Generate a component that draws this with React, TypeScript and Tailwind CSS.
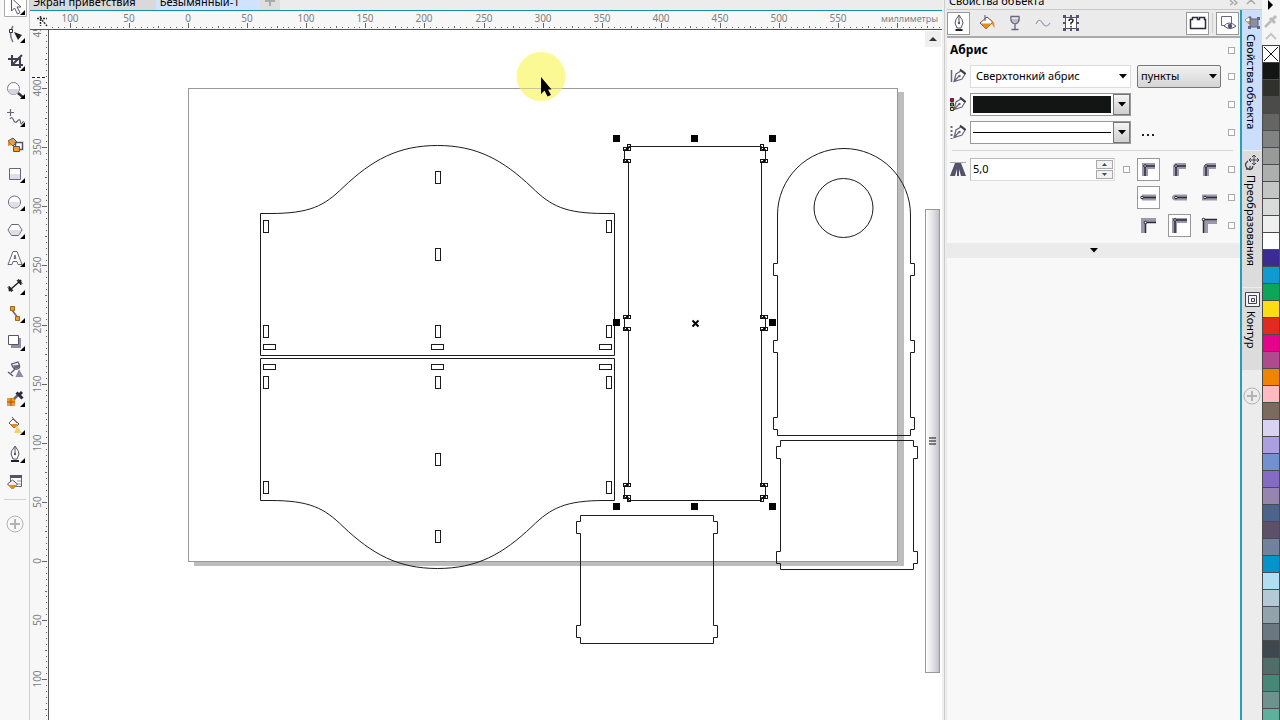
import type { ReactNode } from "react"

const TICK = 5.911
const ORIGIN_X = 188
const ORIGIN_Y = 561

const swatches = [
  "#131514", "#30312d", "#4b4b4a", "#656664", "#818282", "#989a98", "#adafae", "#c3c5c4", "#d9dada", "#eef0ef",
  "#ffffff", "#3b2c94", "#109bd0", "#0ca65b", "#fbdd13", "#e22b20", "#e4038a", "#b04a8e", "#f08300", "#ffbabf",
  "#7c6a5e", "#d9d2f3", "#ab9fdf", "#7391ce", "#866bc4", "#9585af", "#4d648a", "#5c506a", "#73829c", "#0494c9",
  "#b1def2", "#b4c8d6", "#93a3ab", "#6a7780", "#3f484e", "#516d69", "#478777", "#70928f", "#5eb09d",
]

const tools: { label: string; flyout: boolean; art: ReactNode }[] = [
  {
    label: "Указатель",
    flyout: true,
    art: (
      <>
        <path d="M1.500 0V24.500H23.500V0" fill="#fff" stroke="#aaa" />
        <path d="M8.500 6v13l3-3 3 6 2.500-1.500-3-5.500h4z" fill="#fff" stroke="#55536b" />
      </>
    ),
  },
  {
    label: "Форма",
    flyout: true,
    art: (
      <>
        <path d="M10 6Q5 14 10 22" fill="none" stroke="#77758a" strokeWidth="1.500" />
        <path d="M6.500 9.500h3v3h-3z" fill="#fff" stroke="#333" />
        <path d="M11 12l8 3-4 5z" fill="#222" />
      </>
    ),
  },
  {
    label: "Обрезка",
    flyout: true,
    art: <path d="M5 11H17V20M9 7V17H20M9 17L19 7" fill="none" stroke="#403e4c" strokeWidth="2" />,
  },
  {
    label: "Масштаб",
    flyout: true,
    art: (
      <>
        <circle cx="10.500" cy="12.500" r="6" fill="#fff" stroke="#77758a" />
        <path d="M5 13h11a5.500 5.500 0 0 1-11 0z" fill="#d5d5e2" />
        <path d="M15 17l6 5" stroke="#333240" strokeWidth="2.500" />
      </>
    ),
  },
  {
    label: "Свободная форма",
    flyout: true,
    art: (
      <path d="M7.500 5v7M4 8.500h7M7 15q2-3 3.500 1t4 1 3 1 3-1" fill="none" stroke="#68667c" strokeWidth="1.200" />
    ),
  },
  {
    label: "Интеллектуальная заливка",
    flyout: false,
    art: (
      <>
        <path d="M5 9l5-3 4 4-4 4z" fill="#e0a24c" stroke="#55536b" />
        <path d="M5 9l4 4-4 1z" fill="#e88b1b" />
        <path d="M12.500 10.500h7v7h-7z" fill="#fff" stroke="#55536b" strokeWidth="1.500" />
        <path d="M10.500 14.500h6v5h-6z" fill="#f39a1f" stroke="#55536b" />
      </>
    ),
  },
  {
    label: "Прямоугольник",
    flyout: true,
    art: (
      <>
        <path d="M6.500 8.500h11v11h-11z" fill="#fff" stroke="#68667c" />
        <path d="M7 14h10v5H7z" fill="#dedee8" />
      </>
    ),
  },
  {
    label: "Эллипс",
    flyout: true,
    art: (
      <>
        <circle cx="11.500" cy="14" r="6" fill="#fff" stroke="#68667c" />
        <path d="M6 14h11a5.500 5.500 0 0 1-11 0z" fill="#dedee8" />
      </>
    ),
  },
  {
    label: "Многоугольник",
    flyout: true,
    art: (
      <>
        <path d="M8.500 8.500h7l3.500 5.500-3.500 5.500h-7L5 14z" fill="#fff" stroke="#68667c" />
        <path d="M6 14h12l-3 5H9z" fill="#dedee8" />
      </>
    ),
  },
  {
    label: "Текст",
    flyout: true,
    art: (
      <path
        d="M5 20.500L10 7.500h4l5 13h-4l-1-3h-4l-1 3zM11 14.500h2l-1-3.500z"
        fill="#fff"
        stroke="#68667c"
      />
    ),
  },
  {
    label: "Размерная линия",
    flyout: true,
    art: (
      <>
        <path d="M8 17l8-7" stroke="#222" strokeWidth="1.500" />
        <path d="M6 19V14l4 4.500zM18 8v5l-4-4.500zM4.500 15l4.500 5M15 7l4.500 5" fill="#222" stroke="#222" strokeWidth=".8" />
      </>
    ),
  },
  {
    label: "Соединительная линия",
    flyout: true,
    art: (
      <>
        <path d="M9 10l6 8" stroke="#68667c" strokeWidth="1.500" />
        <path d="M7.500 6.500h4v4h-4zM12.500 16.500h4v4h-4z" fill="#f39a1f" stroke="#a0651d" />
      </>
    ),
  },
  {
    label: "Тень",
    flyout: true,
    art: (
      <>
        <path d="M8 10h10v10H8z" fill="#8f8da6" />
        <path d="M5.500 7.500h10v9h-10z" fill="#fff" stroke="#55536b" />
      </>
    ),
  },
  {
    label: "Прозрачность",
    flyout: false,
    art: (
      <>
        <path d="M16 13l4.500 8h-8z" fill="#8f8da6" />
        <path d="M8.500 8L15 6q3.500 6-.5 7t-6-5z" fill="#e7e7f0" stroke="#55536b" strokeWidth="1.200" />
        <path d="M10 9.500l6-.5q.5 3-2 3.500t-4-3z" fill="#68667c" />
        <path d="M12 13l-4 4M5 16l5 4" stroke="#55536b" strokeWidth="1.200" />
      </>
    ),
  },
  {
    label: "Пипетка",
    flyout: true,
    art: (
      <>
        <path d="M4 14h8v8H4z" fill="#f39a1f" />
        <path d="M4 18h8M8 14v8" stroke="#9b5b18" />
        <path d="M11 15l5-5" stroke="#68667c" strokeWidth="2.500" />
        <path d="M13.500 8.500l6 6M15 12l4-4" stroke="#2e2c3c" strokeWidth="3" />
      </>
    ),
  },
  {
    label: "Интерактивная заливка",
    flyout: true,
    art: (
      <>
        <path d="M14 14l5 7h-8z" fill="#f5cf6c" />
        <path d="M6 11l4-4 6 5-5 4z" fill="#fff" stroke="#55536b" />
        <path d="M7 12l8 0-4 4z" fill="#e88b1b" />
        <path d="M9 5l5 6" stroke="#55536b" />
      </>
    ),
  },
  {
    label: "Абрис",
    flyout: true,
    art: (
      <>
        <path d="M12 6q-4 5-4 8l2 5h4l2-5q0-3-4-8zM12 7v6" fill="#fff" stroke="#55536b" />
        <circle cx="12" cy="14" r="1.200" fill="#55536b" />
        <path d="M8 21h8" stroke="#222" strokeWidth="2" />
      </>
    ),
  },
  {
    label: "Заливка",
    flyout: false,
    art: (
      <>
        <path d="M7.500 7.500h11v11h-11z" fill="#fff" stroke="#68667c" />
        <path d="M7 7h12v3H7z" fill="#55536b" />
        <path d="M14 13h4M14 16h4" stroke="#8f8da6" />
        <path d="M4.500 16l5-4 5 4-5 5z" fill="#f6efe6" stroke="#55536b" />
        <path d="M5 17h9l-4.500 4z" fill="#e88b1b" />
      </>
    ),
  },
]

function PlusCircle({ size }: { size: number }) {
  return (
    <svg width={size} height={size} viewBox="0 0 18 18" fill="none" stroke="#b3b3b3">
      <circle cx="9" cy="9" r="8" />
      <path d="M9 4v10M4 9h10" strokeWidth="2" />
    </svg>
  )
}

function Toolbox() {
  return (
    <nav aria-label="Инструменты" className="flex w-[30px] shrink-0 flex-col items-center border-r border-[#d0d0d0] bg-[#f8f8f8]">
      <div className="-mt-2 flex flex-col">
        {tools.map((tool) => (
          <button key={tool.label} type="button" aria-label={tool.label} className="h-7 w-6">
            <svg width="24" height="28">
              {tool.art}
              {tool.flyout && <path d="M22 18v5h-5z" fill="#000" />}
            </svg>
          </button>
        ))}
      </div>
      <div className="mt-[3px] h-px w-[22px] bg-[#d0d0d0]" />
      <button type="button" aria-label="Настроить" className="mt-[15px]">
        <PlusCircle size={18} />
      </button>
    </nav>
  )
}

function tickLength(i: number) {
  if (i % 10 === 0) return 5
  return i % 5 === 0 ? 2 : 1
}

function HorizontalRuler() {
  const ticks = Array.from({ length: 160 }, (_, n) => n - 23)
  return (
    <div className="relative h-[19px] shrink-0 overflow-hidden border-b border-[#555] bg-[#f7f7f7]">
      <svg className="block h-[18px] w-full">
        <g stroke="#333" strokeWidth="1.500" strokeDasharray="2 1">
          <path d="M7 7.500h10M10.500 5v10M12 9l5 6" />
        </g>
        <g transform="translate(-30 0)" fontFamily="'Noto Sans', sans-serif" fontSize="10" fill="#808080">
          {ticks.map((i) => {
            const x = Math.round(ORIGIN_X + i * TICK)
            const len = tickLength(i)
            return (
              <g key={i}>
                <rect x={x} y={17 - len} width="1" height={len} fill="#666" />
                {i % 10 === 0 && i < 120 && (
                  <text x={x} y="11" textAnchor="middle">
                    {Math.abs(i * 5)}
                  </text>
                )}
              </g>
            )
          })}
        </g>
      </svg>
      <span className="absolute top-0 right-1 font-['Noto_Sans',sans-serif] text-[9px] leading-4 text-[#808080]">
        миллиметры
      </span>
    </div>
  )
}

function VerticalRuler() {
  const ticks = Array.from({ length: 160 }, (_, n) => n - 90)
  return (
    <div className="w-[19px] shrink-0 overflow-hidden border-r border-[#555] bg-[#f7f7f7]">
      <svg className="block h-full w-[18px]">
        <g transform="translate(0 -30)" fontFamily="'Noto Sans', sans-serif" fontSize="10" fill="#808080">
          {ticks.map((i) => {
            const y = Math.round(ORIGIN_Y + i * TICK)
            const len = tickLength(i)
            return (
              <g key={i}>
                <rect x={17 - len} y={y} width={len} height="1" fill="#666" />
                {i % 10 === 0 && (
                  <text transform={`translate(11 ${y}) rotate(-90)`} textAnchor="middle">
                    {Math.abs(i * 5)}
                  </text>
                )}
              </g>
            )
          })}
          <path d="M2 77.500H17" stroke="#222" strokeDasharray="3 2" />
        </g>
      </svg>
    </div>
  )
}

// Outline of a panel with tabs sticking out on both sides
function tabbedSides(left: number, right: number, tabs: number[], out: number, bottom: number) {
  const down = tabs.map((y) => `V${y}H${right + out}V${y + 12}H${right}`).join("")
  const up = [...tabs].reverse().map((y) => `V${y + 12}H${left - out}V${y}H${left}`).join("")
  return `${down}V${bottom}H${left}${up}`
}

function panelPath(left: number, right: number, top: number, bottom: number, tabs: number[], out = 4) {
  return `M${left} ${top}H${right}${tabbedSides(left, right, tabs, out, bottom)}Z`
}

const wallSlots = [
  [263.5, 220.5], [606.5, 220.5], [435.5, 171.5], [435.5, 248.5], [263.5, 325.5], [435.5, 325.5], [606.5, 325.5],
]

function Wall() {
  return (
    <>
      <path d="M260.500 355.500V213.500H270C310 213.500 324 206 343 187.500C372 160 398 145.500 437.500 145.500S503 160 532 187.500C551 206 565 213.500 605 213.500H614.500V355.500Z" />
      {wallSlots.map(([x, y]) => (
        <rect key={`${x}-${y}`} x={x} y={y} width="5" height="12" />
      ))}
      {[263.5, 431.5, 599.5].map((x) => (
        <rect key={x} x={x} y="344.500" width="12" height="5" />
      ))}
    </>
  )
}

const nodeColumns = [623.5, 627.5, 760.5, 764.5]
const nodeRows = [147.5, 159.5, 315.5, 327.5, 483.5, 495.5]

function Drawing() {
  return (
    <svg className="h-full w-full bg-white" role="img" aria-label="Чертёж">
      <g transform="translate(-49 -30)" fill="none">
        <path d="M898 92h6v474H194v-4h704z" fill="#bdbdbd" />
        <rect x="188.500" y="88.500" width="709" height="473" stroke="#999" />
        <circle cx="541" cy="76.500" r="24.500" fill="#fbf98b" fillOpacity=".92" />
        <path d="M516 88.500h50" stroke="#999" strokeOpacity=".5" />
        <g stroke="#1c1c1c">
          <Wall />
          <g transform="translate(0 714) scale(1 -1)">
            <Wall />
          </g>
          <path d={panelPath(628.5, 761.5, 146.5, 500.5, [149.5, 317.5, 485.5])} />
          <path d={`M777.500 215A66.500 66.500 0 0 1 910.500 215${tabbedSides(777.5, 910.5, [263.5, 340.5, 417.5], 4, 435.5)}Z`} />
          <circle cx="843.500" cy="208" r="29.500" />
          <path d={panelPath(780.5, 913.5, 440.5, 569.5, [446.5, 551.5])} />
          <path d={panelPath(580.5, 713.5, 515.5, 643.5, [521.5, 625.5])} />
        </g>
        <g stroke="#111">
          {nodeColumns.map((x) => nodeRows.map((y) => <rect key={`${x}-${y}`} x={x} y={y} width="3" height="3" />))}
          {[627.5, 760.5].map((x) =>
            [144.5, 498.5].map((y) => <rect key={`${x}-${y}`} x={x} y={y} width="3" height="3" />),
          )}
        </g>
        <g fill="#000">
          {[613, 691, 769].map((x) =>
            [135, 319, 503].map((y) =>
              x === 691 && y === 319 ? null : <rect key={`${x}-${y}`} x={x} y={y} width="7" height="7" />,
            ),
          )}
        </g>
        <path d="M692.500 320.500l6 6M698.500 320.500l-6 6" stroke="#000" strokeWidth="2" />
        <path d="M541 77v17l3.500-3.500 3 6 3.500-1.500-3-5.500h3.500z" fill="#000" />
      </g>
    </svg>
  )
}

function Scrollbar() {
  return (
    <div className="flex w-[17px] shrink-0 flex-col bg-white pt-px">
      <button type="button" aria-label="Прокрутить вверх" className="flex h-4 w-4 items-center justify-center bg-[#efefef]">
        <svg width="8" height="4">
          <path d="M4 0l4 4H0z" fill="#333" />
        </svg>
      </button>
      <div className="flex-[163]" />
      <div className="flex w-[15px] flex-[464] items-center justify-center border border-[#999] bg-linear-to-r from-white via-[#e4e4e8] to-[#c2c2c8]">
        <svg width="7" height="8">
          <path d="M0 1h7M0 4h7M0 7h7" stroke="#555" strokeWidth="1.500" />
        </svg>
      </div>
      <div className="flex-[47]" />
    </div>
  )
}

function Workspace() {
  return (
    <main className="flex min-w-0 flex-1 flex-col border-r-2 border-[#f0f0f0]">
      <div className="flex h-[11px] shrink-0 items-end overflow-hidden border-b border-[#1590b5] bg-[#ececec] text-[11px] leading-4">
        <button type="button" className="shrink-0 bg-[#d9d9d9] pr-5 pl-[3px]">
          Экран приветствия
        </button>
        <button type="button" className="shrink-0 bg-[#cfe2fe] pr-5 pl-1">
          Безымянный-1
        </button>
        <button type="button" aria-label="Новый документ" className="flex h-4 w-5 items-end justify-center bg-[#dedede] pb-1">
          <svg width="10" height="10">
            <path d="M5 0v10M0 5h10" stroke="#aaa" strokeWidth="2" />
          </svg>
        </button>
      </div>
      <HorizontalRuler />
      <div className="flex min-h-0 flex-1">
        <VerticalRuler />
        <div className="min-w-0 flex-1">
          <Drawing />
        </div>
        <Scrollbar />
      </div>
    </main>
  )
}

function Lock({ label }: { label: string }) {
  return (
    <input
      type="checkbox"
      aria-label={label}
      className="h-[7px] w-[7px] shrink-0 appearance-none border border-[#aaa] bg-white"
    />
  )
}

function Caret() {
  return (
    <svg width="8" height="5" className="pointer-events-none">
      <path d="M0 0h8L4 4.500z" fill="#000" />
    </svg>
  )
}

function PenIcon({ children }: { children?: ReactNode }) {
  return (
    <svg width="16" height="16" className="shrink-0" fill="none">
      {children}
      <path d="M4 13.500L6 6l5-3 4 3-3 5-8 2.500zM4 13.500L9 8" fill="#fff" stroke="#68667c" strokeWidth="1.200" />
      <path d="M10 1.500L15.500 6" stroke="#3d3b4e" strokeWidth="2" />
      <circle cx="9.500" cy="8" r="1.200" fill="#68667c" />
    </svg>
  )
}

function Row({ icon, children, lock }: { icon: ReactNode; children: ReactNode; lock: string }) {
  return (
    <div className="flex h-7 items-center">
      {icon}
      <div className="ml-1 flex min-w-0 flex-1 items-center">{children}</div>
      <div className="ml-[7px] flex">
        <Lock label={lock} />
      </div>
    </div>
  )
}

function DropButton({ label, children }: { label: string; children: ReactNode }) {
  return (
    <button type="button" aria-label={label} className="flex h-[23px] min-w-0 flex-1 border border-[#999] bg-white">
      <span className="flex flex-1 items-center self-stretch p-0.5">{children}</span>
      <span className="flex w-[17px] items-center justify-center self-stretch border border-[#777] bg-linear-to-b from-[#f4f4f4] to-[#cfcfcf]">
        <Caret />
      </span>
    </button>
  )
}

function OptionButton({ label, on, children }: { label: string; on?: boolean; children: ReactNode }) {
  return (
    <button
      type="button"
      aria-label={label}
      aria-pressed={!!on}
      className={`flex h-[23px] w-[23px] items-center justify-center border ${on ? "border-[#999] bg-white" : "border-transparent"}`}
    >
      {children}
    </button>
  )
}

function Corner({ fat, line, dot }: { fat: string; line: string; dot: [number, number] }) {
  return (
    <svg width="17" height="17" fill="none">
      <path d={fat} fill="#9a98aa" />
      <path d={line} stroke="#2d2b3b" strokeWidth="1.500" />
      <circle cx={dot[0]} cy={dot[1]} r="1.300" fill="#fff" stroke="#222" />
    </svg>
  )
}

function OptionRow({ lock, children }: { lock: string; children: ReactNode }) {
  return (
    <>
      <div className="ml-[7px] flex w-[84px] justify-between">{children}</div>
      <div className="ml-[7px] flex">
        <Lock label={lock} />
      </div>
    </>
  )
}

function PropertyToolbar() {
  return (
    <div className="flex h-7 shrink-0 items-center gap-[5px] border-b-2 border-[#aaa] bg-[#ebebeb] pr-px">
      <OptionButton label="Абрис" on>
        <svg width="16" height="18" fill="none">
          <path d="M8 1q-4 5-4 8l2 5h4l2-5q0-3-4-8zM8 2v6" fill="#fff" stroke="#55536b" />
          <circle cx="8" cy="9" r="1.200" fill="#55536b" />
          <path d="M4.500 16h7" stroke="#222" strokeWidth="2" />
        </svg>
      </OptionButton>
      <OptionButton label="Заливка">
        <svg width="18" height="18" className="shrink-0" fill="none">
          <path d="M2 9l7-6 6 5-7 7z" fill="#fff" stroke="#55536b" />
          <path d="M2.500 9.500h11.500L8 15z" fill="#e88b1b" />
          <path d="M7 1v6" stroke="#55536b" />
          <path d="M13 7q4-1 3.500 7l-2-3z" fill="#e88b1b" />
        </svg>
      </OptionButton>
      <OptionButton label="Прозрачность">
        <svg width="16" height="18" fill="none">
          <path d="M4 2.500h8q1 6-4 7.500-5-1.500-4-7.500zM8 10v5M4.500 15.500h7" stroke="#68667c" strokeWidth="1.300" />
          <path d="M5 5h6v2q-1 2-3 2T5 7z" fill="#bdbccb" />
        </svg>
      </OptionButton>
      <OptionButton label="Кривая">
        <svg width="16" height="16" fill="none">
          <path d="M1 9Q4 2 7.500 8T15 8" stroke="#9997aa" strokeWidth="1.200" />
        </svg>
      </OptionButton>
      <OptionButton label="Сводка">
        <svg width="18" height="18" className="shrink-0" fill="none">
          <path d="M3.500 3.500h11v11h-11z" fill="#fff" stroke="#55536b" />
          <path d="M1 1h3v3H1zM14 1h3v3h-3zM1 14h3v3H1zM14 14h3v3h-3zM8 1h2v3H8zM8 14h2v3H8zM1 8h3v2H1zM14 8h3v2h-3z" fill="#55536b" />
          <path d="M7 7q0-2 2-2t2 1.500T9 9v1.500M9 12v1.500" stroke="#222" strokeWidth="1.500" />
        </svg>
      </OptionButton>
      <div className="ml-auto flex items-center gap-[3px]">
        <OptionButton label="Вкладки" on>
          <svg width="18" height="16" className="shrink-0" fill="none">
            <path d="M1.500 13.500v-9h2v-2h5v2h2v-2h5v2h1v9z" fill="#fff" stroke="#2e2c3c" strokeWidth="1.500" />
          </svg>
        </OptionButton>
        <span className="h-5 w-px bg-[#ccc]" />
        <OptionButton label="Просмотр" on>
          <svg width="18" height="18" className="shrink-0" fill="none">
            <path d="M2.500 2.500h10v9h-10z" fill="#fff" stroke="#68667c" />
            <path d="M5 12q5-6 12 0-6 5-12 0z" fill="#fff" stroke="#55536b" />
            <circle cx="11" cy="12" r="2.200" fill="#55536b" />
          </svg>
        </OptionButton>
      </div>
    </div>
  )
}

function OutlinePanel() {
  return (
    <section className="flex min-w-0 flex-1 flex-col border-r-2 border-[#22a0b8] bg-[#f8f8f8]">
      <PropertyToolbar />
      <div className="flex h-6 items-center justify-between pr-[5px] pl-[3px]">
        <h2 className="text-[12px] leading-5 font-bold">Абрис</h2>
        <Lock label="Блокировка абриса" />
      </div>
      <div className="pr-[5px] pl-[3px]">
        <Row
          lock="Блокировка ширины"
          icon={
            <PenIcon>
              <path d="M1.500 2v12" stroke="#68667c" strokeWidth="1.500" />
            </PenIcon>
          }
        >
          <div className="relative flex min-w-0 flex-1 items-center">
            <select aria-label="Ширина абриса" className="h-[23px] w-full appearance-none border border-[#ddd] bg-white pl-[5px] text-[11px]">
              <option>Сверхтонкий абрис</option>
            </select>
            <span className="pointer-events-none absolute right-1">
              <Caret />
            </span>
          </div>
          <div className="relative ml-1.5 flex w-[84px] items-center">
            <select
              aria-label="Единицы"
              className="h-[23px] w-full appearance-none rounded-xs border border-[#777] bg-linear-to-b from-[#f2f2f2] to-[#d4d4d4] pl-[3px] text-[11px]"
            >
              <option>пункты</option>
            </select>
            <span className="pointer-events-none absolute right-1">
              <Caret />
            </span>
          </div>
        </Row>
        <Row
          lock="Блокировка цвета"
          icon={
            <PenIcon>
              <path d="M.5 2.500h3v3h-3z" fill="#a5163c" stroke="#6b1730" />
              <path d="M.5 7h3v3h-3z" fill="#47b36f" stroke="#222" />
              <path d="M.5 11.500h3v3h-3z" fill="#f1e36a" stroke="#222" />
            </PenIcon>
          }
        >
          <DropButton label="Цвет абриса">
            <span className="h-full w-full bg-[#131514]" />
          </DropButton>
          <div className="ml-1.5 w-[84px]" />
        </Row>
        <Row
          lock="Блокировка стиля"
          icon={
            <PenIcon>
              <path d="M1.500 2v13" stroke="#68667c" strokeWidth="2" strokeDasharray="2 2" />
            </PenIcon>
          }
        >
          <DropButton label="Стиль линии">
            <span className="h-px w-full bg-black" />
          </DropButton>
          <button type="button" aria-label="Параметры" className="ml-1.5 flex h-[23px] w-[84px] items-center pt-1.5 pl-[5px]">
            <svg width="12" height="2">
              <path d="M0 0h2v2H0zM5 0h2v2H5zM10 0h2v2h-2z" fill="#222" />
            </svg>
          </button>
        </Row>
        <hr className="mx-0.5 my-1 border-[#d5d5d5]" />
        <div className="flex h-7 items-center">
          <svg width="16" height="16" className="shrink-0">
            <path d="M0 1.500h16" stroke="#aaa" />
            <path d="M5 2h6l5 13h-5L9 8v7H7V8l-2 7H0z" fill="#55536b" />
          </svg>
          <div className="ml-1 flex h-[23px] min-w-0 flex-1 border border-[#bbb] border-r-[#ddd] border-b-[#ddd] bg-white p-px">
            <input aria-label="Предел скоса" defaultValue="5,0" className="min-w-0 flex-1 pl-px text-[11px] outline-none" />
            <div className="flex w-[17px] flex-col gap-px">
              <button type="button" aria-label="Больше" className="flex flex-1 items-center justify-center border border-[#aaa] bg-[#f2f2f2]">
                <svg width="5" height="3">
                  <path d="M2.500 0L5 3H0z" fill="#3c4a6b" />
                </svg>
              </button>
              <button type="button" aria-label="Меньше" className="flex flex-1 items-center justify-center border border-[#aaa] bg-[#f2f2f2]">
                <svg width="5" height="3">
                  <path d="M0 0h5L2.500 3z" fill="#3c4a6b" />
                </svg>
              </button>
            </div>
          </div>
          <div className="ml-2 flex">
            <Lock label="Блокировка предела скоса" />
          </div>
          <OptionRow lock="Блокировка углов">
            <OptionButton label="Острые углы" on>
              <Corner fat="M2 2h13v6H8v7H2z" line="M5 15V5h10" dot={[5, 5]} />
            </OptionButton>
            <OptionButton label="Скругленные углы">
              <Corner fat="M2 15V6q0-4 4-4h9v6H8v7z" line="M5 15V5h10" dot={[5, 5]} />
            </OptionButton>
            <OptionButton label="Скошенные углы">
              <Corner fat="M2 15V6l4-4h9v6H8v7z" line="M5 15V5h10" dot={[5, 5]} />
            </OptionButton>
          </OptionRow>
        </div>
        <div className="flex h-7 items-center justify-end">
          <OptionRow lock="Блокировка концов">
            <OptionButton label="Прямой конец" on>
              <Corner fat="M2 5.500h14v6H2z" line="M2 8.500h14" dot={[2, 8.5]} />
            </OptionButton>
            <OptionButton label="Круглый конец">
              <Corner fat="M4 5.500h12v6H4q-3-.5-3-3t3-3z" line="M5 8.500h11" dot={[5, 8.5]} />
            </OptionButton>
            <OptionButton label="Квадратный конец">
              <Corner fat="M1 5.500h15v6H1z" line="M4 8.500h12" dot={[4, 8.5]} />
            </OptionButton>
          </OptionRow>
        </div>
        <div className="flex h-7 items-center justify-end">
          <OptionRow lock="Блокировка положения">
            <OptionButton label="Абрис снаружи">
              <Corner fat="M1 1h15v5H6v10H1z" line="M5.500 16V5.500H16" dot={[5.5, 5.5]} />
            </OptionButton>
            <OptionButton label="Абрис по центру" on>
              <Corner fat="M1 1h15v5H6v10H1z" line="M4 16V3h12" dot={[4, 3]} />
            </OptionButton>
            <OptionButton label="Абрис внутри">
              <Corner fat="M2 2h14v5H7v9H2z" line="M2.500 16V2.500H16" dot={[2.5, 2.5]} />
            </OptionButton>
          </OptionRow>
        </div>
      </div>
      <button type="button" aria-label="Дополнительно" className="mt-1 flex h-[15px] items-center justify-center bg-[#ebebeb]">
        <Caret />
      </button>
    </section>
  )
}

function DockerTabs() {
  return (
    <div className="flex w-5 shrink-0 flex-col bg-[#ececec] text-[11px]">
      <button type="button" className="flex h-[140px] w-5 flex-col items-center bg-[#cbdefc] pt-1">
        <svg width="16" height="16" fill="none">
          <path d="M1 6l5-4 3 4-4 4z" fill="#fff" stroke="#8f8da6" />
          <path d="M1 7h7l-3 3z" fill="#d9a24c" />
          <path d="M6 5h8v8H6z" fill="#8f8da6" stroke="#68667c" />
          <path d="M4 3h3v3M13 3h3v3h-3zM4 12h3v3H4zM13 12h3v3h-3z" fill="#68667c" />
        </svg>
        <span className="mt-1 mr-0.5 leading-4 [writing-mode:vertical-rl]">Свойства объекта</span>
      </button>
      <button type="button" className="mt-px flex h-[136px] w-5 flex-col items-center bg-[#dcdcdc] pt-1">
        <svg width="16" height="16" fill="none" stroke="#44424f">
          <path d="M10 0v10M5 5h10M8 2l2-2 2 2M8 8l2 2 2-2M7 3L5 5l2 2M13 3l2 2-2 2" />
          <path d="M4 6q-5 4 0 8 4 2 5-3M2 14h4v-3" strokeWidth="1.300" />
        </svg>
        <span className="mt-1 mr-0.5 leading-4 [writing-mode:vertical-rl]">Преобразования</span>
      </button>
      <button type="button" className="mt-px flex h-[82px] w-5 flex-col items-center bg-[#dcdcdc] pt-1">
        <svg width="15" height="15" fill="none" stroke="#44424f">
          <path d="M.5.5h14v14H.5zM3.500 3.500h8v8h-8zM6.500 6.500h3v3h-3z" fill="#f1f1f6" />
        </svg>
        <span className="mt-1 mr-0.5 leading-4 [writing-mode:vertical-rl]">Контур</span>
      </button>
      <button type="button" aria-label="Добавить окно" className="mt-[17px] self-center">
        <PlusCircle size={18} />
      </button>
    </div>
  )
}

function Docker() {
  return (
    <aside className="flex w-[318px] shrink-0 flex-col border-l border-[#ccc] bg-[#ececec] pl-[2px]">
      <header className="flex h-2.5 shrink-0 items-end justify-between overflow-hidden border-b border-[#c8c8c8] pr-1.5 pl-0.5">
        <h1 className="text-[11px] leading-4">Свойства объекта</h1>
        <svg width="27" height="9" fill="none" stroke="#aaa" strokeWidth="1.500">
          <path d="M1 0l3 3-3 2M5 0l3 3-3 2M18 4l4-4M22 0l4 4" />
        </svg>
      </header>
      <div className="flex min-h-0 flex-1">
        <OutlinePanel />
        <DockerTabs />
      </div>
    </aside>
  )
}

function Palette() {
  return (
    <div className="flex w-[18px] shrink-0 flex-col overflow-hidden bg-[#f5f5f5]">
      <div className="h-[45px] shrink-0">
        <svg width="18" height="45" fill="none">
          <path d="M6 0l5 5-5 5z" fill="#000" />
          <path d="M3 27l6-6" stroke="#bbb" strokeWidth="2.500" />
          <path d="M8 18l5 5M10 20l4-4" stroke="#bbb" strokeWidth="3" />
          <path d="M4 39l5-5 5 5" stroke="#c5c5c5" strokeWidth="2" />
        </svg>
      </div>
      <div className="flex shrink-0 flex-col border-t border-[#444]">
        <button type="button" aria-label="Без цвета" className="h-[17px] border-x border-b border-[#444] bg-white">
          <svg width="16" height="16">
            <path d="M1 1l14 14M15 1L1 15" stroke="#111" />
          </svg>
        </button>
        {swatches.map((color) => (
          <button
            key={color}
            type="button"
            aria-label={color}
            className="h-[17px] border-x border-b border-[#4a4a4f]"
            style={{ backgroundColor: color }}
          />
        ))}
      </div>
    </div>
  )
}

export default function App() {
  return (
    <div className="flex h-screen overflow-hidden bg-[#f7f7f7] font-['Noto_Sans',sans-serif] text-black">
      <Toolbox />
      <Workspace />
      <Docker />
      <Palette />
    </div>
  )
}
